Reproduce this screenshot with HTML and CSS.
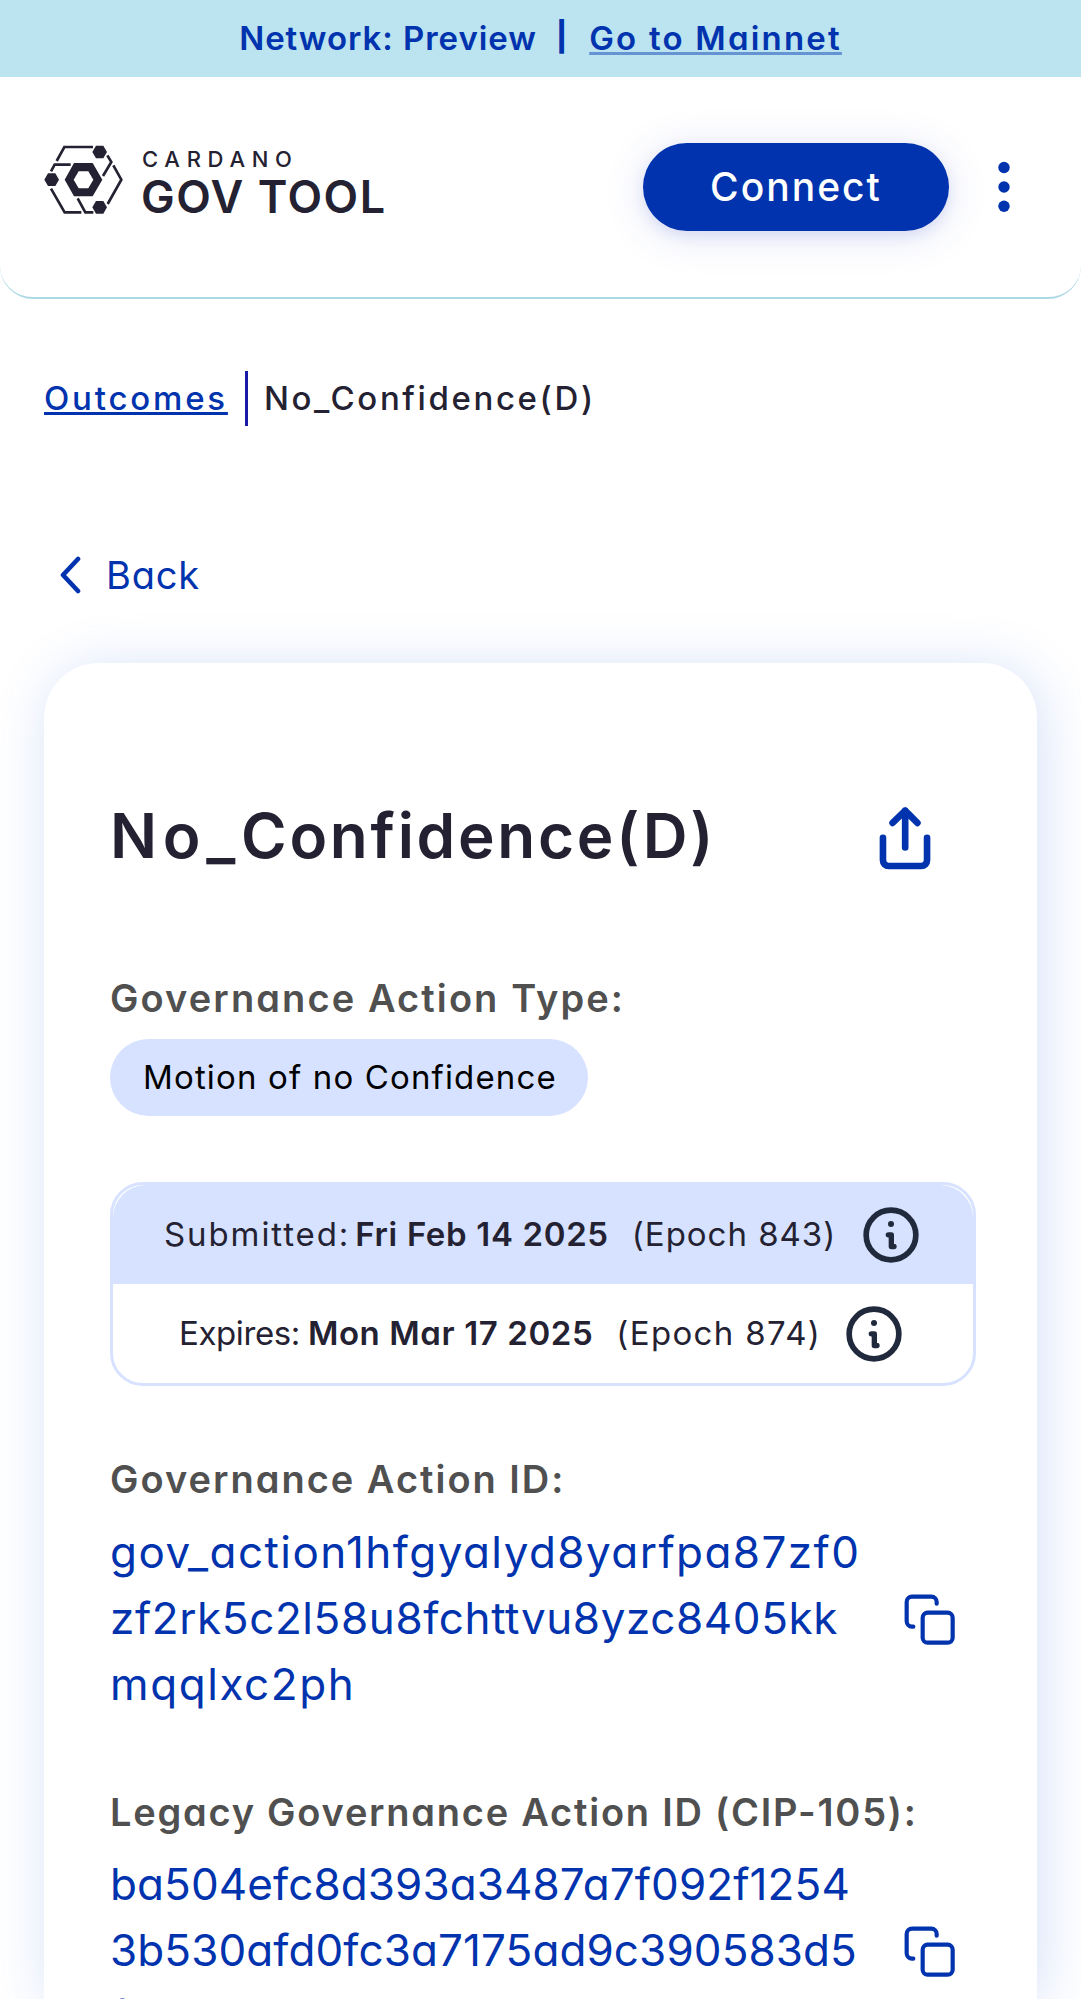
FILE: index.html
```
<!DOCTYPE html>
<html lang="en">
<head>
<meta charset="utf-8">
<title>GovTool - No_Confidence(D)</title>
<link rel="stylesheet" href="styles.css">
</head>
<body>
<svg class="sprite" aria-hidden="true">
  <symbol id="info" viewBox="9 50 168 168">
    <circle cx="93" cy="134" r="74.5" fill="none" stroke="currentColor" stroke-width="17"/>
    <circle cx="93" cy="101" r="9" fill="currentColor"/>
    <path d="M85 133.500H94V168.500H102" fill="none" stroke="currentColor" stroke-width="16" stroke-linecap="round" stroke-linejoin="round"/>
  </symbol>
  <symbol id="copy" viewBox="36 36 165 165">
    <g fill="none" stroke="currentColor" stroke-width="12.500" stroke-linecap="round">
      <path d="M70 140H66a16 16 0 0 1-16-16V66a16 16 0 0 1 16-16h58a16 16 0 0 1 16 16v5"/>
      <rect x="98" y="98" width="90" height="90" rx="15"/>
    </g>
  </symbol>
</svg>

<div class="banner">
  <span class="network">Network: Preview</span>
  <span class="pipe">|</span>
  <a class="mainnet">Go to Mainnet</a>
</div>

<header class="header">
  <div class="logo">
    <svg class="logo-mark" viewBox="41 46 237 207">
      <g fill="none" stroke="currentColor" stroke-width="8">
        <path d="M79 94L102 52H188"/>
        <path d="M62 125L73 105H121"/>
        <path d="M231 77L243 97L218 139"/>
        <path d="M249 107L273 150L232 223"/>
        <path d="M62 177L103 248H153"/>
        <path d="M142 206L165 248H189"/>
      </g>
      <g fill="currentColor">
        <path d="M186 67L197 48H219L230 67L219 86H197Z"/>
        <path d="M42 150L53 131H75L86 150L75 169H53Z"/>
        <path d="M186 233L197 214H219L230 233L219 252H197Z"/>
        <path fill-rule="evenodd" d="M103 150L131 100H187L216 150L187 200H131ZM130 150L145 176H174L189 150L174 125H145Z"/>
      </g>
    </svg>
    <div class="logo-text">
      <span class="logo-top">CARDANO</span>
      <span class="logo-bottom">GOV TOOL</span>
    </div>
  </div>
  <div class="actions">
    <button class="connect">Connect</button>
    <svg class="menu" viewBox="0 0 66 66" fill="currentColor">
      <circle cx="33" cy="13.500" r="5.700"/><circle cx="33" cy="33" r="5.700"/><circle cx="33" cy="52.300" r="5.700"/>
    </svg>
  </div>
</header>

<nav class="breadcrumbs">
  <a class="crumb-link">Outcomes</a>
  <span class="crumb-divider"></span>
  <span class="crumb-current">No_Confidence(D)</span>
</nav>

<a class="back">
  <svg class="chevron" viewBox="0 0 22 38"><path d="M19 3L4 19L19 35" fill="none" stroke="currentColor" stroke-width="4.600" stroke-linecap="round" stroke-linejoin="round"/></svg>
  <span>Back</span>
</a>

<main class="card">
  <div class="title-row">
    <h1 class="title"><span class="title-prefix">No_</span>Confidence(D)</h1>
    <svg class="share" viewBox="50 40 172 206" fill="none" stroke="currentColor" stroke-width="20" stroke-linecap="round" stroke-linejoin="round">
      <path d="M97 99L135 62L172 99M135 62V173"/>
      <path d="M68 144V212a17 17 0 0 0 17 17H184a17 17 0 0 0 17-17V144"/>
    </svg>
  </div>

  <h2 class="label label-type">Governance Action Type:</h2>
  <div class="pill">Motion of no Confidence</div>

  <div class="dates">
    <div class="date-row submitted">
      <span class="date-name">Submitted:</span>
      <b class="date-value">Fri Feb 14 2025</b>
      <span class="epoch">(Epoch 843)</span>
      <svg class="info"><use href="#info"/></svg>
    </div>
    <div class="date-row expires">
      <span class="date-name">Expires:</span>
      <b class="date-value">Mon Mar 17 2025</b>
      <span class="epoch">(Epoch 874)</span>
      <svg class="info"><use href="#info"/></svg>
    </div>
  </div>

  <h2 class="label label-id">Governance Action ID:</h2>
  <div class="id-row">
    <div class="id">
      <span class="id-a">gov_action1hfgyalyd8yarfpa87zf0</span>
      <span class="id-b">zf2rk5c2l58u8fchttvu8yzc8405kk</span>
      <span class="id-c">mqqlxc2ph</span>
    </div>
    <svg class="copy"><use href="#copy"/></svg>
  </div>

  <h2 class="label label-legacy">Legacy Governance Action ID (CIP-105):</h2>
  <div class="id-row legacy">
    <div class="id">
      <span>ba504efc8d393a3487a7f092f1254</span>
      <span>3b530afd0fc3a7175ad9c390583d5</span>
      <span>fa8e8</span>
    </div>
    <svg class="copy"><use href="#copy"/></svg>
  </div>
</main>
</body>
</html>
```
FILE: styles.css
```
* { box-sizing: border-box; }

body {
  margin: 0;
  height: 1999px;
  overflow: hidden;
  background: #fff;
  color: #242232;
  font-family: Inter, "Open Sans", sans-serif;
  font-size: 33px;
  font-feature-settings: "cv11";
  white-space: nowrap;
}

svg { display: block; flex: none; }
.sprite { position: absolute; width: 0; height: 0; }

.banner {
  display: flex;
  justify-content: center;
  height: 77px;
  line-height: 77px;
  background: #bbe3f0;
  color: #0033ad;
  font-weight: 600;
}
.network { letter-spacing: .95px; }
.pipe { margin: 0 22px 0 19px; font-size: 29px; line-height: 74px; font-weight: 800; }
.mainnet {
  letter-spacing: 2.2px;
  text-decoration: underline rgba(0, 51, 173, .45) 3px;
  text-underline-offset: 2px;
  text-decoration-skip-ink: none;
}

.header {
  display: flex;
  justify-content: space-between;
  align-items: flex-start;
  height: 222px;
  padding: 66px 44px 0;
  border-bottom: 2px solid #add8e6;
  border-radius: 0 0 33px 33px;
}
.logo { display: flex; gap: 19px; margin-top: 2px; }
.logo-mark { width: 79px; height: 69px; }
.logo-text { display: flex; flex-direction: column; padding-top: 2px; }
.logo-top { font-size: 22px; line-height: 24px; font-weight: 500; letter-spacing: 6.7px; margin-bottom: 4px; }
.logo-bottom { font-size: 45px; line-height: 44px; font-weight: 600; letter-spacing: 1.5px; margin-left: -1px; }

.actions { display: flex; align-items: center; gap: 22px; color: #0033ad; }
.connect {
  width: 306px;
  height: 88px;
  padding: 0;
  border: 0;
  border-radius: 44px;
  background: #0033ad;
  color: #fff;
  font: 500 39px/88px Inter, sans-serif;
  letter-spacing: 2px;
  box-shadow: 0 5px 14px rgba(0, 51, 173, .1), 0 5px 40px rgba(60, 80, 200, .15);
}
.menu { width: 66px; height: 66px; }

.breadcrumbs {
  display: flex;
  padding: 72px 44px 0;
  height: 127px;
  line-height: 55px;
  font-weight: 500;
}
.crumb-link {
  color: #0033ad;
  letter-spacing: 2.8px;
  text-decoration: underline 3px;
  text-underline-offset: 2px;
  text-decoration-skip-ink: none;
}
.crumb-divider { width: 3px; height: 55px; margin: 0 16px 0 17px; background: #1a1aa6; }
.crumb-current { letter-spacing: 2.6px; }

.back {
  display: flex;
  align-items: center;
  gap: 25px;
  margin: 120px 0 0 59px;
  height: 58px;
  color: #0033ad;
  font-size: 38px;
  line-height: 58px;
  letter-spacing: .8px;
}
.chevron { width: 22px; height: 38px; }

.card {
  margin: 59px 44px 0;
  padding: 129px 66px 0;
  height: 1336px;
  border-radius: 55px 55px 0 0;
  background: #fff;
  box-shadow: 5px 5px 55px rgba(47, 98, 220, .2);
}
.title-row { display: flex; justify-content: space-between; align-items: center; height: 88px; padding-right: 37px; }
.title { margin: 0; font-size: 62px; line-height: 88px; font-weight: 600; letter-spacing: 2.7px; }
.title-prefix { letter-spacing: 5.7px; }
.share { width: 57px; height: 69px; margin-top: 2px; color: #0033ad; }

.label { margin: 0; font-size: 38px; line-height: 56px; font-weight: 600; color: #505050; }
.label-type { margin-top: 90px; letter-spacing: 2.1px; }
.pill {
  width: 478px;
  height: 77px;
  margin-top: 13px;
  padding-left: 33px;
  border-radius: 39px;
  background: #d6e2ff;
  color: #000;
  line-height: 77px;
  letter-spacing: 1.15px;
}

.dates { margin: 66px -5px 0 0; border: 3px solid #d6e2ff; border-radius: 33px; }
.date-row { display: flex; align-items: center; height: 99px; line-height: 40px; }
.date-row > :not(svg) { padding-bottom: 2px; }
.date-value { font-weight: 600; }
.info { width: 56px; height: 56px; color: #212a3d; }
.submitted { padding-left: 51px; border-radius: 33px 33px 0 0; background: #d6e2ff; }
.submitted .date-name { letter-spacing: 1.9px; }
.submitted .date-value { margin: 0 23px 0 5px; letter-spacing: .66px; }
.submitted .epoch { margin-right: 27px; letter-spacing: .98px; }
.expires { padding-left: 66px; }
.expires .date-name { letter-spacing: -.4px; }
.expires .date-value { margin: 0 23px 0 8px; letter-spacing: .6px; }
.expires .epoch { margin-right: 25px; letter-spacing: 1.35px; }

.label-id { margin-top: 65px; letter-spacing: 2px; }
.label-legacy { margin-top: 67px; letter-spacing: 1.76px; }
.id-row {
  display: flex;
  justify-content: space-between;
  align-items: center;
  margin-top: 12px;
  padding-right: 14px;
  color: #0033ad;
}
.id { display: flex; flex-direction: column; height: 198px; font-size: 44px; line-height: 66px; }
.id-a { letter-spacing: 1.44px; }
.id-b { letter-spacing: .6px; }
.id-c { letter-spacing: 1.6px; }
.legacy { margin-top: 11px; }
.legacy .id { letter-spacing: .1px; }
.copy { width: 55px; height: 55px; margin-top: 3px; }
```
